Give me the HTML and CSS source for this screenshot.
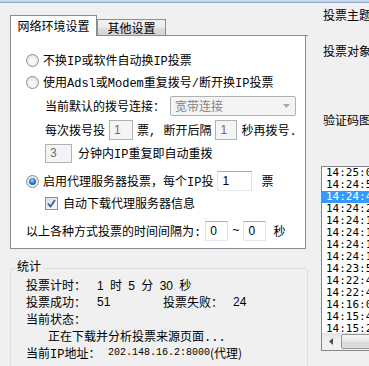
FILE: index.html
```html
<!DOCTYPE html>
<html lang="zh-CN">
<head>
    <meta charset="UTF-8">
    <title>投票设置</title>
    <link rel="stylesheet" href="styles.css">
</head>
<body>
    <div class="band"></div>
    <div class="frame">
        <!-- 左侧：设置页 -->
        <div class="left">
            <div class="tabs">
                <div class="tab active">网络环境设置</div>
                <div class="tab">其他设置</div>
                <div class="tab-fill"></div>
            </div>
            <div class="panel">
                <div class="row opt"><span class="radio"></span>不换IP或软件自动换IP投票</div>
                <div class="row opt r2"><span class="radio"></span>使用Adsl或Modem重复拨号/断开换IP投票</div>
                <div class="row sub r3">当前默认的拨号连接：<span class="combo">宽带连接<svg class="arrow" width="7" height="4" viewBox="0 0 7 4"><polygon points="0,0 7,0 3.5,4" fill="#a8a8a8"/></svg></span></div>
                <div class="row sub r4">每次拨号投<span class="box off w24">1</span><span class="gap4">票, 断开后隔</span><span class="box off w22 gap4">1</span><span class="gap4">秒再拨号.</span></div>
                <div class="row sub r5"><span class="box off w27">3</span><span class="gap6">分钟内IP重复即自动重拨</span></div>
                <div class="row opt r6"><span class="radio on"></span>启用代理服务器投票，每个IP投<span class="box w35 gap3">1</span><span class="gap9">票</span></div>
                <div class="row sub r7">
                    <span class="check"><svg width="9" height="9" viewBox="0 0 9 9"><path d="M1 4.5 L3.5 7.5 L8 1" fill="none" stroke="#3c5da8" stroke-width="1.8"/></svg></span>
                    自动下载代理服务器信息
                </div>
                <div class="row r8">以上各种方式投票的时间间隔为:<span class="box w23 gap14">0</span><span class="gap4">~</span><span class="box w23 gap4">0</span><span class="gap7">秒</span></div>
            </div>

            <!-- 统计 -->
            <fieldset class="stats">
                <legend>统计</legend>
                <div class="line"><span class="lbl">投票计时：</span><span class="num timer">1 时 5 分 30 秒</span></div>
                <div class="line"><span class="lbl">投票成功：</span><span class="num w66">51</span><span class="lbl2">投票失败：</span><span class="num">24</span></div>
                <div class="line">当前状态：</div>
                <div class="line status">正在下载并分析投票来源页面...</div>
                <div class="line"><span class="lbl ip">当前IP地址：</span><span class="addr">202.148.16.2:8000</span><span class="via">(代理)</span></div>
            </fieldset>
        </div>

        <!-- 右侧 -->
        <div class="right">
            <div class="cap c1">投票主题</div>
            <div class="cap c2">投票对象</div>
            <div class="cap c3">验证码图</div>
            <div class="list">
                <div class="items">
                    <div class="item">14:25:00</div>
                    <div class="item">14:24:50</div>
                    <div class="item sel">14:24:40</div>
                    <div class="item">14:24:28</div>
                    <div class="item">14:24:14</div>
                    <div class="item">14:24:14</div>
                    <div class="item">14:24:13</div>
                    <div class="item">14:24:13</div>
                    <div class="item">14:23:55</div>
                    <div class="item">14:22:40</div>
                    <div class="item">14:22:40</div>
                    <div class="item">14:16:01</div>
                    <div class="item">14:15:41</div>
                    <div class="item">14:15:25</div>
                </div>
                <div class="hscroll">
                    <span class="sbtn"><svg width="4" height="7" viewBox="0 0 4 7"><polygon points="4,0 4,7 0,3.5" fill="#4d4d4d"/></svg></span>
                    <span class="thumb"></span>
                </div>
            </div>
        </div>
    </div>
</body>
</html>
```

FILE: styles.css
```css
/* Janela geral */
body {
    margin: 0;
    background-color: #f0f0f0;
    font-family: "Liberation Mono", "Noto Sans CJK SC", monospace;
    font-size: 12px;
    color: #000;
    overflow: hidden;
    height: 366px;
}

.band {
    height: 2px;
    background: linear-gradient(#d3e3f5, #b3cbe8);
    border-bottom: 1px solid #8eaacc;
}

.frame {
    display: flex;
}

/* Coluna esquerda */
.left {
    width: 298px;
    flex: none;
    padding: 12px 0 0 10px;
}

.tabs {
    display: flex;
    align-items: flex-end;
    height: 21px;
}

.tab {
    box-sizing: border-box;
    display: flex;
    align-items: center;
    justify-content: center;
    height: 17px;
    width: 69px;
    border: 1px solid #898c95;
    background: linear-gradient(#f2f2f2, #ebebeb 50%, #dddddd 51%, #d4d4d4);
    padding-top: 1px;
}

.tab.active {
    height: 21px;
    width: 87px;
    border-bottom: none;
    background: #fff;
    padding-top: 0;
}

.tab-fill {
    flex: 1;
    border-bottom: 1px solid #898c95;
}

.panel {
    box-sizing: border-box;
    width: 296px;
    height: 213px;
    background: #fff;
    border: 1px solid #898c95;
    border-top: none;
    padding: 14px 0 0 15px;
}

.row {
    display: flex;
    align-items: center;
    height: 20px;
    white-space: nowrap;
}

.sub { padding-left: 19px; }
.r2, .r7 { margin-top: 2px; }
.r3, .r4 { margin-top: 4px; }
.r5 { margin-top: 3px; }
.r6, .r8 { margin-top: 8px; }

.gap3 { margin-left: 3px; }
.gap4 { margin-left: 4px; }
.gap6 { margin-left: 6px; }
.gap7 { margin-left: 7px; }
.gap9 { margin-left: 9px; }
.gap14 { margin-left: 14px; }

/* Radio e checkbox */
.radio {
    box-sizing: border-box;
    display: flex;
    align-items: center;
    justify-content: center;
    width: 13px;
    height: 13px;
    margin-right: 4px;
    border: 1px solid #8e8f8f;
    border-radius: 50%;
    background: radial-gradient(circle at 50% 60%, #f7f7f7 30%, #d6d6d6);
}

.radio.on::after {
    content: "";
    width: 7px;
    height: 7px;
    border-radius: 50%;
    background: radial-gradient(circle at 45% 35%, #a6dcff, #2a7fd4 45%, #0c3f85);
}

.check {
    box-sizing: border-box;
    display: flex;
    align-items: center;
    justify-content: center;
    width: 13px;
    height: 13px;
    margin-right: 5px;
    border: 1px solid #8e8f8f;
    background: linear-gradient(135deg, #dcdcdc, #fbfbfb);
}

/* Caixas de texto */
.box {
    box-sizing: border-box;
    display: flex;
    align-items: center;
    height: 20px;
    padding-left: 4px;
    margin-left: 4px;
    border: 1px solid;
    border-color: #abadb3 #dbdfe6 #e3e9ef #e2e3ea;
    background: #fff;
    font-family: "Liberation Sans", sans-serif;
    font-size: 12px;
}

.box.off {
    background: #f4f4f4;
    border-color: #adb2b5;
    color: #6d6d6d;
}

.r5 .box { margin-left: 0; height: 19px; }
.w22 { width: 22px; }
.w23 { width: 23px; }
.w24 { width: 24px; }
.w27 { width: 27px; }
.w35 { width: 35px; }

.combo {
    box-sizing: border-box;
    display: flex;
    align-items: center;
    width: 126px;
    height: 20px;
    margin-left: 5px;
    padding: 0 5px 0 4px;
    border: 1px solid #adb2b5;
    border-radius: 2px;
    background: #f4f4f4;
    color: #838383;
}

.combo .arrow { margin-left: auto; }

/* Grupo de estatisticas */
.stats {
    box-sizing: border-box;
    width: 298px;
    height: 130px;
    margin: 11px 0 0 0;
    padding: 0;
    border: 1px solid #d5dfe5;
    border-radius: 3px;
}

.stats legend {
    margin-left: 4px;
    padding: 0 2px;
    line-height: 16px;
}

.line {
    display: flex;
    align-items: center;
    height: 17px;
    padding-left: 15px;
    white-space: nowrap;
}

.line.status { padding-left: 37px; }

.lbl { width: 71px; }
.lbl.ip { width: 82px; }
.lbl2 { width: 70px; }
.num { font-family: "Liberation Sans", "Noto Sans CJK SC", sans-serif; }
.timer { word-spacing: 3px; }
.w66 { width: 66px; }
.addr { font-size: 10px; }
.via { font-family: "Noto Sans CJK SC", sans-serif; }

/* Coluna direita */
.right {
    width: 200px;
    flex: none;
    padding-left: 13px;
}

.cap {
    padding-left: 2px;
    line-height: 16px;
    white-space: nowrap;
}

.c1 { margin-top: 6px; }
.c2 { margin-top: 20px; }
.c3 { margin-top: 53px; }

.list {
    width: 120px;
    margin-top: 36px;
    border: 1px solid #828790;
    background: #fff;
}

.items {
    height: 166px;
    overflow: hidden;
}

.item {
    height: 12px;
    line-height: 12px;
    padding-left: 4px;
    font-family: "DejaVu Sans Mono", monospace;
    font-size: 11px;
}

.item.sel {
    background: #3399ff;
    color: #fff;
}

.hscroll {
    display: flex;
    height: 17px;
    background: linear-gradient(#e3e3e3, #f0f0f0 40%, #f0f0f0);
}

.sbtn {
    display: flex;
    align-items: center;
    justify-content: center;
    width: 17px;
}

.thumb {
    box-sizing: border-box;
    width: 70px;
    height: 15px;
    margin: 1px 0 0 2px;
    border: 1px solid #979797;
    border-radius: 2px;
    background: linear-gradient(#f6f6f6, #e6e6e6 50%, #d8d8d8 51%, #dcdcdc);
}
```
